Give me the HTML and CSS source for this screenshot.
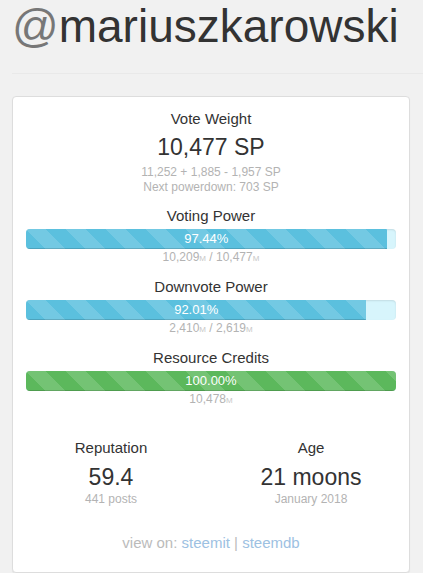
FILE: index.html
```html
<!DOCTYPE html>
<html lang="en">
<head>
    <meta charset="UTF-8">
    <meta name="viewport" content="width=device-width, initial-scale=1.0">
    <title>@mariuszkarowski</title>
    <link rel="stylesheet" href="styles.css">
</head>
<body>
    <div class="page-header">
        <h1><span class="at">@</span>mariuszkarowski</h1>
    </div>

    <div class="panel">
        <div class="stat">
            <div class="label">Vote Weight</div>
            <div class="big">10,477 SP</div>
            <div class="sub sub-first">11,252 + 1,885 - 1,957 SP</div>
            <div class="sub">Next powerdown: 703 SP</div>
        </div>

        <div class="meter">
            <div class="label">Voting Power</div>
            <div class="progress">
                <div class="progress-bar" style="width: 97.44%">97.44%</div>
            </div>
            <div class="sub">10,209<small>M</small> / 10,477<small>M</small></div>
        </div>

        <div class="meter">
            <div class="label">Downvote Power</div>
            <div class="progress">
                <div class="progress-bar" style="width: 92.01%">92.01%</div>
            </div>
            <div class="sub">2,410<small>M</small> / 2,619<small>M</small></div>
        </div>

        <div class="meter">
            <div class="label">Resource Credits</div>
            <div class="progress">
                <div class="progress-bar green" style="width: 100%">100.00%</div>
            </div>
            <div class="sub">10,478<small>M</small></div>
        </div>

        <div class="row">
            <div class="col">
                <div class="label">Reputation</div>
                <div class="big">59.4</div>
                <div class="sub">441 posts</div>
            </div>
            <div class="col">
                <div class="label">Age</div>
                <div class="big">21 moons</div>
                <div class="sub">January 2018</div>
            </div>
        </div>

        <div class="links">
            view on: <a href="#">steemit</a> | <a href="#">steemdb</a>
        </div>
    </div>
</body>
</html>
```

FILE: styles.css
```css
body {
    font-family: "Liberation Sans", Arial, sans-serif;
    background: #f1f1f1;
    color: #333;
    margin: 0;
    padding: 0;
}

.page-header {
    margin-left: 12px;
    padding: 1px 0 22px;
    border-bottom: 1px solid #e9e9e9;
}

.page-header h1 {
    margin: 0;
    font-size: 46px;
    line-height: 50px;
    font-weight: normal;
    color: #333;
}

.page-header .at {
    color: #777;
}

.panel {
    margin: 22px 13px 0 12px;
    padding: 13px 13px 20px;
    background: #fff;
    border: 1px solid #ddd;
    border-radius: 4px;
    box-shadow: 0 1px 1px rgba(0, 0, 0, 0.05);
    text-align: center;
}

.label {
    font-size: 15px;
    line-height: 18px;
}

.big {
    font-size: 23px;
    line-height: 26px;
    margin-top: 6px;
}

.sub {
    font-size: 12px;
    line-height: 15px;
    color: #b3b3b3;
}

.sub-first {
    margin-top: 5px;
}

.sub small {
    font-size: 8px;
    color: #c8c8c8;
}

.meter {
    margin-top: 12px;
}

.progress {
    height: 20px;
    margin: 4px 0 1px;
    background: #d7f5fc;
    border-radius: 4px;
    overflow: hidden;
    box-shadow: inset 0 1px 2px rgba(0, 0, 0, 0.1);
    display: flex;
}

.progress-bar {
    height: 100%;
    font-size: 13px;
    line-height: 20px;
    color: #fff;
    text-align: center;
    background-color: #5bc0de;
    background-image: linear-gradient(45deg, rgba(255, 255, 255, 0.15) 25%, transparent 25%, transparent 50%, rgba(255, 255, 255, 0.15) 50%, rgba(255, 255, 255, 0.15) 75%, transparent 75%, transparent);
    background-size: 40px 40px;
    box-shadow: inset 0 -1px 0 rgba(0, 0, 0, 0.15);
}

.progress-bar.green {
    background-color: #5cb85c;
}

.row {
    display: flex;
    margin: 31px -15px 0;
}

.col {
    flex: 1;
}

.col .big {
    margin-top: 7px;
}

.col .sub {
    margin-top: 2px;
}

.links {
    margin-top: 27px;
    font-size: 15px;
    line-height: 18px;
    color: #bbb;
}

.links a {
    color: #9dc1e2;
    text-decoration: none;
}
```
